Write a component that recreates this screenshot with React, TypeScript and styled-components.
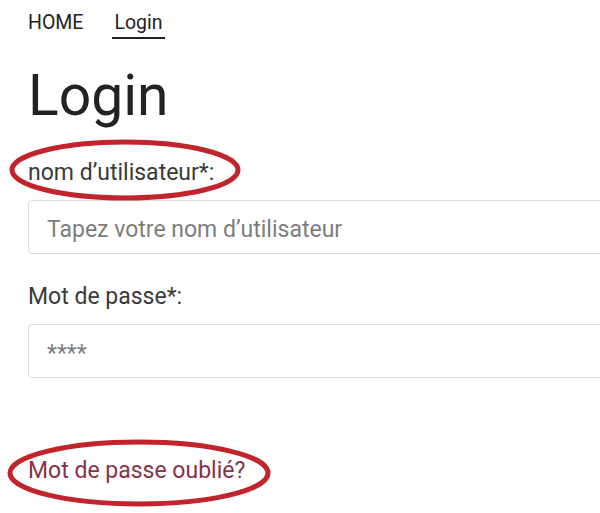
import React from "react";
import styled, { createGlobalStyle } from "styled-components";

const Global = createGlobalStyle`
  html, body { margin: 0; padding: 0; background: #fff; }
  body { font-family: Roboto, "Liberation Sans", Arial, sans-serif; color: #222; }
`;

const Page = styled.div`
  padding: 11px 0 30px 28px;
  width: 600px;
  box-sizing: border-box;
  overflow: hidden;
`;

const Nav = styled.nav`
  display: flex;
  gap: 31px;
  align-items: flex-start;
`;

const NavItem = styled.a<{ $active?: boolean }>`
  font-size: 19.5px;
  line-height: 24px;
  color: #222;
  text-decoration: none;
  padding-bottom: 2px;
  border-bottom: 2px solid ${(p) => (p.$active ? "#222" : "transparent")};
  margin-left: ${(p) => (p.$active ? "-2px" : "0")};
  padding-left: ${(p) => (p.$active ? "2px" : "0")};
  padding-right: ${(p) => (p.$active ? "2px" : "0")};
`;

const Title = styled.h1`
  margin: 28px 0 0;
  font-size: 57px;
  font-weight: 400;
  line-height: 57px;
  color: #222;
`;

const Field = styled.div<{ $top: number }>`
  margin-top: ${(p) => p.$top}px;
  display: flex;
  flex-direction: column;
  gap: 14px;
  align-items: flex-start;
`;

const Marked = styled.span`
  position: relative;
  display: inline-block;
`;

const Label = styled.label`
  font-size: 23px;
  line-height: 26px;
  color: #3a3a3a;
`;

const Input = styled.input`
  box-sizing: border-box;
  width: 620px;
  height: 54px;
  border: 1px solid #dcdcdc;
  border-radius: 4px;
  padding: 4px 18px 0;
  font-family: Roboto, "Liberation Sans", Arial, sans-serif;
  font-size: 23px;
  color: #333;
  background: #fff;
  outline: none;
  &::placeholder { color: #7d7d7d; }
`;

const Link = styled.a`
  display: inline-block;
  font-size: 23px;
  line-height: 26px;
  color: #873347;
  text-decoration: none;
`;

const LinkRow = styled.div`
  margin-top: 80px;
`;

const Ring = styled.svg<{ $left: number; $top: number }>`
  position: absolute;
  left: ${(p) => p.$left}px;
  top: ${(p) => p.$top}px;
  overflow: visible;
  pointer-events: none;
`;

function Circle({ w, h, left, top }: { w: number; h: number; left: number; top: number }) {
  return (
    <Ring $left={left} $top={top} width={w} height={h} viewBox={`0 0 ${w} ${h}`}>
      <ellipse cx={w / 2} cy={h / 2} rx={w / 2 - 3} ry={h / 2 - 3} fill="none" stroke="#c2242d" strokeWidth={5} />
    </Ring>
  );
}

export default function App() {
  return (
    <>
      <Global />
      <Page>
        <Nav>
          <NavItem href="#">HOME</NavItem>
          <NavItem href="#" $active>Login</NavItem>
        </Nav>
        <Title>Login</Title>
        <Field $top={36}>
          <Marked>
            <Label>nom d’utilisateur*:</Label>
            <Circle w={232} h={62} left={-19} top={-21} />
          </Marked>
          <Input placeholder="Tapez votre nom d’utilisateur" />
        </Field>
        <Field $top={30}>
          <Label>Mot de passe*:</Label>
          <Input type="password" placeholder="****" />
        </Field>
        <LinkRow>
          <Marked>
            <Link href="#">Mot de passe oublié?</Link>
            <Circle w={264} h={68} left={-21} top={-19} />
          </Marked>
        </LinkRow>
      </Page>
    </>
  );
}
